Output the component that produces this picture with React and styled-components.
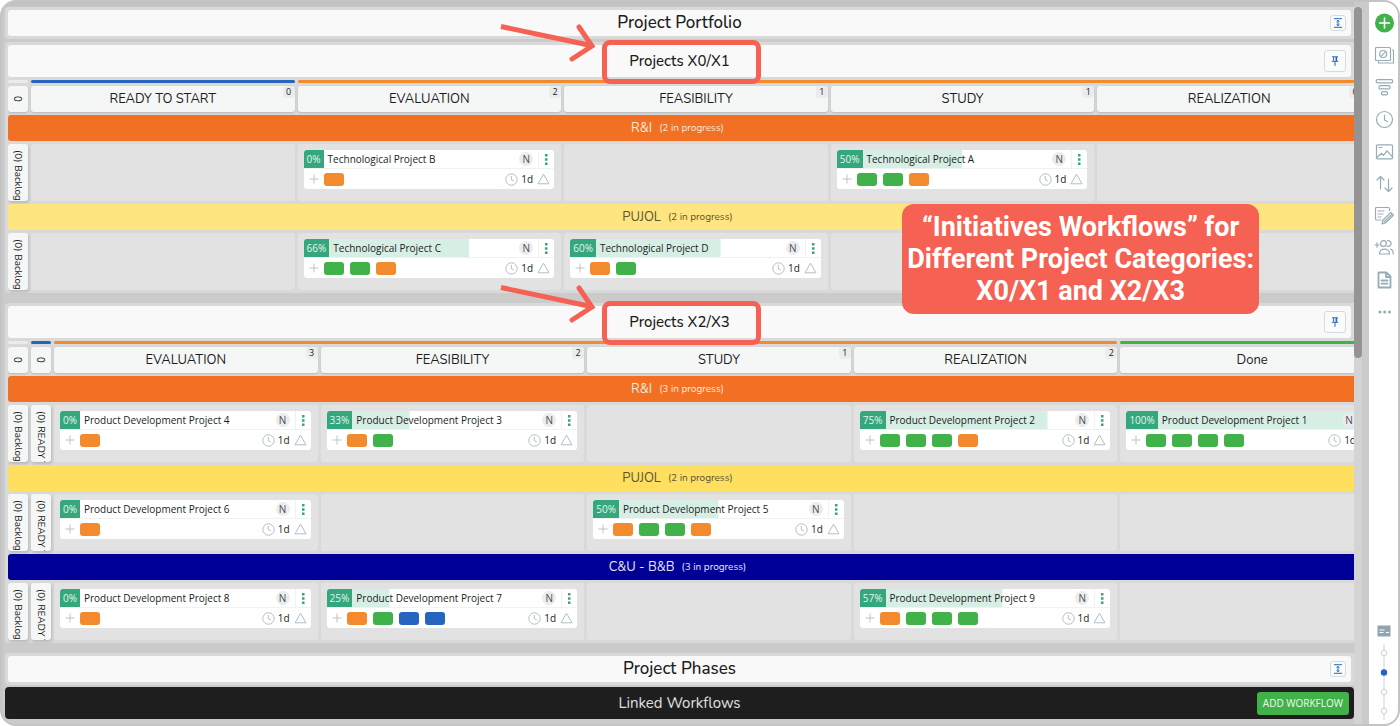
import React from "react";
import styled, { createGlobalStyle } from "styled-components";

const HEADING_FONT = `Nunito, "Noto Sans", sans-serif`;

const COLORS = {
  orange: "#f48a2e",
  green: "#41b149",
  blue: "#2565c0",
  pale: "#ebebeb",
  red: "#f56153",
  icon: "#97acb7",
};

const CATEGORY_X0 = {
  title: "Projects X0/X1",
  collapsed: ["Backlog"],
  strips: [
    { color: "pale", span: 1 },
    { color: "blue", span: 1 },
    { color: "orange", span: 4 },
  ],
  columns: [
    { name: "READY TO START", count: 0 },
    { name: "EVALUATION", count: 2 },
    { name: "FEASIBILITY", count: 1 },
    { name: "STUDY", count: 1 },
    { name: "REALIZATION", count: 0 },
  ],
  lanes: [
    {
      name: "R&I",
      total: 2,
      background: "#f27023",
      color: "#fde9dc",
      cards: {
        1: { name: "Technological Project B", progress: 0, items: ["orange"] },
        3: {
          name: "Technological Project A",
          progress: 50,
          items: ["green", "green", "orange"],
        },
      },
    },
    {
      name: "PUJOL",
      total: 2,
      background: "#ffe580",
      color: "#5c5334",
      cards: {
        1: {
          name: "Technological Project C",
          progress: 66,
          items: ["green", "green", "orange"],
        },
        2: {
          name: "Technological Project D",
          progress: 60,
          items: ["orange", "green"],
        },
      },
    },
  ],
};

const CATEGORY_X2 = {
  title: "Projects X2/X3",
  collapsed: ["Backlog", "READY TO START"],
  strips: [
    { color: "pale", span: 1 },
    { color: "blue", span: 1 },
    { color: "orange", span: 4 },
    { color: "green", span: 1 },
  ],
  columns: [
    { name: "EVALUATION", count: 3 },
    { name: "FEASIBILITY", count: 2 },
    { name: "STUDY", count: 1 },
    { name: "REALIZATION", count: 2 },
    { name: "Done", count: 1 },
  ],
  lanes: [
    {
      name: "R&I",
      total: 3,
      background: "#f27023",
      color: "#fde9dc",
      cards: {
        0: {
          name: "Product Development Project 4",
          progress: 0,
          items: ["orange"],
        },
        1: {
          name: "Product Development Project 3",
          progress: 33,
          items: ["orange", "green"],
        },
        3: {
          name: "Product Development Project 2",
          progress: 75,
          items: ["green", "green", "green", "orange"],
        },
        4: {
          name: "Product Development Project 1",
          progress: 100,
          items: ["green", "green", "green", "green"],
        },
      },
    },
    {
      name: "PUJOL",
      total: 2,
      background: "#ffdf60",
      color: "#5c5334",
      cards: {
        0: {
          name: "Product Development Project 6",
          progress: 0,
          items: ["orange"],
        },
        2: {
          name: "Product Development Project 5",
          progress: 50,
          items: ["orange", "green", "green", "orange"],
        },
      },
    },
    {
      name: "C&U - B&B",
      total: 3,
      background: "#000096",
      color: "#e6e6f4",
      cards: {
        0: {
          name: "Product Development Project 8",
          progress: 0,
          items: ["orange"],
        },
        1: {
          name: "Product Development Project 7",
          progress: 25,
          items: ["orange", "green", "blue", "blue"],
        },
        3: {
          name: "Product Development Project 9",
          progress: 57,
          items: ["orange", "green", "green", "green"],
        },
      },
    },
  ],
};

const GlobalStyle = createGlobalStyle`
  * {
    box-sizing: border-box;
  }

  body {
    margin: 0;
    background-color: #ffffff;
    font-family: "Open Sans", "Noto Sans", sans-serif;
    color: #1c1c1c;
  }

  button {
    padding: 0;
    border: 0;
    background: none;
    font: inherit;
    color: inherit;
    cursor: pointer;
  }

  h1, h2, h3, p {
    margin: 0;
    font-weight: normal;
  }
`;

const Frame = styled.div`
  position: relative;
  display: flex;
  min-height: 100vh;
  border: 2px solid #c4c4c4;
  border-radius: 16px;
  background-color: #cbcbcb;
  overflow: hidden;
`;

const Board = styled.main`
  flex: 1;
  display: flex;
  flex-direction: column;
  gap: 10px;
  min-width: 0;
  padding: 5px 0 5px 3px;
  box-shadow: inset 0 6px 4px -2px #bfbfbf;
`;

const Stack = styled.div`
  display: flex;
  flex-direction: column;
  gap: ${({ $gap }) => $gap}px;
`;

const Workflow = styled.section`
  display: flex;
  flex-direction: column;
  gap: 3px;
  padding: 3px 0 3px 3px;
  border-radius: 4px 0 0 4px;
  background-color: #d9d9d9;
`;

const TitleBar = styled.header`
  display: grid;
  grid-template-columns: 1fr auto 1fr;
  align-items: center;
  height: ${({ $large }) => ($large ? 26 : 32)}px;
  margin-right: 3px;
  padding: 0 5px;
  border-radius: 3px;
  background-color: #f9f9f9;
`;

const BoardTitle = styled.h1`
  grid-column: 2;
  font: 500 17px/26px ${HEADING_FONT};
`;

const WorkflowTitle = styled.h2`
  font: 500 15px/32px ${HEADING_FONT};
`;

const SquareButton = styled.button`
  justify-self: end;
  display: flex;
  align-items: center;
  justify-content: center;
  width: ${({ $size }) => $size}px;
  height: ${({ $size }) => $size}px;
  border: 1px solid #d3dddf;
  border-radius: 3px;
  background-color: #fafbfb;
`;

const Columns = styled.div`
  display: flex;
  flex-direction: column;
  gap: 3px;
  overflow-x: clip;
`;

const Grid = styled.div`
  display: grid;
  grid-template-columns:
    repeat(${({ $collapsed }) => $collapsed}, 20px)
    repeat(5, calc((100% - 28px) / 5));
  gap: 3px;
`;

const Strip = styled.div`
  grid-column: span ${({ $span }) => $span};
  height: 3px;
  border-radius: 2px;
  background-color: ${({ $color }) => COLORS[$color]};
`;

const ColumnHeader = styled.div`
  position: relative;
  height: 26px;
  border-radius: 3px;
  background-color: #f5f7f7;
  box-shadow: 0 1px 2px rgba(0, 0, 0, 0.15);
  text-align: center;
`;

const ColumnName = styled.h3`
  font: 13px/26px ${HEADING_FONT};
`;

const Count = styled.span`
  position: absolute;
  top: 0;
  right: 0;
  width: 12px;
  border-radius: 3px;
  background-color: #ebeced;
  font-size: 9px;
  line-height: 12px;
`;

const CollapsedHeader = styled(ColumnHeader)`
  display: flex;
  align-items: center;
  justify-content: center;
  writing-mode: vertical-rl;
  font-size: 10px;
`;

const Lane = styled.div`
  display: flex;
  align-items: center;
  justify-content: center;
  gap: 7px;
  height: 26px;
  padding-right: 7px;
  border-radius: 3px 0 0 3px;
  background-color: ${({ $background }) => $background};
  color: ${({ $color }) => $color};
  font: 13px/26px ${HEADING_FONT};
`;

const LaneCount = styled.span`
  font-size: 10px;
`;

const CollapsedCell = styled.div`
  height: 57px;
  padding-top: 6px;
  border-radius: 3px;
  background-color: #f5f7f7;
  box-shadow: 1px 2px 3px rgba(0, 0, 0, 0.15);
  writing-mode: vertical-rl;
  font: 10px/20px ${HEADING_FONT};
  white-space: nowrap;
  overflow: hidden;
`;

const Cell = styled.div`
  height: 57px;
  padding: 6px 7px 6px 6px;
  border-radius: 3px;
  background-color: #e2e2e2;
`;

const CardBox = styled.article`
  border-radius: 3px;
  background-color: #ffffff;
  overflow: hidden;
`;

const CardTop = styled.div`
  display: flex;
  align-items: center;
  height: 19px;
  border-bottom: 1px solid #f0f1f1;
  background-image: linear-gradient(#d6eee4, #d6eee4);
  background-repeat: no-repeat;
`;

const Percent = styled.span`
  padding: 0 3px;
  background-color: #34a87c;
  color: #e4f5ee;
  font-size: 10px;
  line-height: 18px;
`;

const CardName = styled.span`
  flex: 1;
  padding-left: 4px;
  font-size: 10px;
  line-height: 18px;
  white-space: nowrap;
`;

const Avatar = styled.span`
  width: 14px;
  margin-right: 5px;
  border-radius: 50%;
  background-color: #eaecee;
  color: #4b4f52;
  font-size: 10px;
  line-height: 14px;
  text-align: center;
`;

const MenuButton = styled.button`
  display: flex;
  align-items: center;
  justify-content: center;
  width: 16px;
  height: 18px;
  border-left: 1px solid #f0f1f1;
`;

const CardBottom = styled.div`
  display: flex;
  align-items: center;
  height: 20px;
  padding: 0 4px 0 5px;
`;

const Items = styled.div`
  flex: 1;
  display: flex;
  gap: 6px;
  padding-left: 5px;
`;

const Item = styled.span`
  width: 20px;
  height: 13px;
  border-radius: 3px;
  background-color: ${({ $color }) => COLORS[$color]};
`;

const Duration = styled.span`
  padding: 0 4px 0 3px;
  font-size: 10px;
  line-height: 20px;
`;

const LinkedBar = styled.footer`
  display: grid;
  grid-template-columns: 1fr auto 1fr;
  align-items: center;
  height: 32px;
  padding: 0 5px;
  border-radius: 4px;
  background-color: #1e1e1e;
`;

const LinkedTitle = styled.h2`
  grid-column: 2;
  color: #e0e0e0;
  font: 15px/32px ${HEADING_FONT};
`;

const AddButton = styled.button`
  justify-self: end;
  height: 23px;
  padding: 0 6px;
  border-radius: 3px;
  background-color: ${COLORS.green};
  color: #f2faf2;
  font-size: 10px;
  font-weight: 500;
`;

const ScrollTrack = styled.div`
  width: 8px;
  margin: 5px 7px 0 0;
  background-color: #d4d4d4;
`;

const ScrollThumb = styled.div`
  height: 49%;
  border-radius: 4px;
  background-color: #949494;
`;

const Rail = styled.nav`
  display: flex;
  flex-direction: column;
  justify-content: space-between;
  align-items: center;
  width: 29px;
  padding: 5px 0 2px 1px;
  background-color: #ffffff;
`;

const RailTools = styled.div`
  display: flex;
  flex-direction: column;
`;

const RailButton = styled.button`
  display: flex;
  align-items: center;
  justify-content: center;
  width: 28px;
  height: 32px;
`;

const HighlightAnchor = styled.div`
  position: relative;
  grid-column: 2;
`;

const Highlight = styled.span`
  position: absolute;
  inset: -5px -31px -7px -27px;
  border: 5px solid ${COLORS.red};
  border-radius: 8px;
`;

const Arrow = styled.svg`
  position: absolute;
  top: -22px;
  right: calc(100% + 34px);
`;

const Callout = styled.aside`
  position: absolute;
  top: 202px;
  right: 139px;
  padding: 7px 5px;
  border-radius: 12px;
  background-color: ${COLORS.red};
  color: #ffffff;
  font: 700 27px/32px Roboto, sans-serif;
  text-align: center;
`;

function Icon({ children }) {
  return (
    <svg
      width="20"
      height="20"
      viewBox="0 0 20 20"
      fill="none"
      stroke={COLORS.icon}
      strokeWidth="1.2"
      strokeLinecap="round"
      strokeLinejoin="round"
    >
      {children}
    </svg>
  );
}

const TOOLS = [
  {
    label: "Add",
    icon: (
      <>
        <circle cx="10.5" cy="10" r="9.5" fill={COLORS.green} stroke="none" />
        <path d="M10.5 5v10M5.500 10h10" stroke="#fff" strokeWidth="1.6" />
      </>
    ),
  },
  {
    label: "Blocked cards",
    icon: (
      <>
        <rect x="1.500" y="2.500" width="15" height="13" rx="1" />
        <path d="M18.500 5h1v13H4.500v-1.500" />
        <circle cx="9.200" cy="9" r="3.500" />
        <path d="M7 11.300l4.600-4.600" />
      </>
    ),
  },
  {
    label: "Filter",
    icon: (
      <>
        <rect x="2.200" y="2.700" width="16.4" height="3.2" rx="1.2" />
        <rect x="5" y="8.700" width="11" height="3.2" rx="1.2" />
        <rect x="7.500" y="14.700" width="6" height="3.2" rx="1.2" />
      </>
    ),
  },
  {
    label: "History",
    icon: (
      <>
        <circle cx="10.5" cy="10.5" r="8" />
        <path d="M10.5 6v5l3.2 1.7" />
      </>
    ),
  },
  {
    label: "Background",
    icon: (
      <>
        <rect x="2.5" y="3.800" width="16" height="14" rx="1" />
        <path d="M3 16.300l4.500-4 2 2 3.500-4.500 5 5.500M5 6.500h3" />
      </>
    ),
  },
  {
    label: "Sort",
    icon: (
      <path d="M6.500 16V3.500M3 7l3.500-3.500L10 7M14.500 6v12.500M11 15l3.500 3.500 3.500-3.500" />
    ),
  },
  {
    label: "Edit",
    icon: (
      <>
        <path d="M7 15H2.500a1 1 0 0 1-1-1V3.500a1 1 0 0 1 1-1h12a1 1 0 0 1 1 1v2M4 6h6M4 9h5M4 12h3" />
        <path d="M8 19l.8-3.800 8-7.700 2.600 2.700-8 7.800zM10 17l7.500-7.300" />
      </>
    ),
  },
  {
    label: "Invite users",
    icon: (
      <>
        <path d="M.8 8h4.400M3 5.800v4.400" />
        <circle cx="9.500" cy="6.500" r="2.900" />
        <path d="M13.500 3.700a2.900 2.900 0 1 1 0 5.600M5.500 17c-.6-6.500 10.600-6.500 10 0zM16.500 12c1.700.7 2.800 2.500 2.700 5" />
      </>
    ),
  },
  {
    label: "Documents",
    icon: (
      <path
        d="M4.500 3.500h8l4 4v11h-12zM12 3.800v4.200h4.200M7.500 11.500h6M7.500 14.700h6"
        strokeWidth="1.8"
      />
    ),
  },
  {
    label: "More",
    icon: (
      <g fill={COLORS.icon} stroke="none">
        <circle cx="6" cy="11" r="1.500" />
        <circle cx="10.700" cy="11" r="1.500" />
        <circle cx="15.500" cy="11" r="1.500" />
      </g>
    ),
  },
];

function FitIcon() {
  return (
    <svg width="10" height="10" viewBox="0 0 10 10" stroke={COLORS.blue} fill="none">
      <path d="M1 .7h8M1 9.300h8" />
      <path d="M5 2.500v5M3.500 3.700L5 2.300l1.500 1.400M3.500 6.300L5 7.700l1.500-1.400" />
    </svg>
  );
}

function PinIcon() {
  return (
    <svg width="10" height="10" viewBox="0 0 10 10" stroke={COLORS.blue} fill="none">
      <path d="M2 .8h6M3.600 1v3.700M6.400 1v3.700M1.800 5.300h6.400M5 5.500v4.300" />
      <path d="M6.400 1v4" strokeWidth="1.500" />
    </svg>
  );
}

function Card({ card }) {
  return (
    <CardBox>
      <CardTop style={{ backgroundSize: `${card.progress}% 100%` }}>
        <Percent>{card.progress}%</Percent>
        <CardName>{card.name}</CardName>
        <Avatar>N</Avatar>
        <MenuButton aria-label="Card menu">
          <svg width="3" height="11" viewBox="0 0 3 11" fill="#34a87c">
            <path d="M0 0h2.500v2.500H0zM0 4.200h2.500v2.500H0zM0 8.400h2.500v2.500H0z" />
          </svg>
        </MenuButton>
      </CardTop>
      <CardBottom>
        <svg width="10" height="10" viewBox="0 0 10 10" stroke="#b9c4ca">
          <path d="M5 .5v9M.5 5h9" />
        </svg>
        <Items>
          {card.items.map((color, index) => (
            <Item key={index} $color={color} />
          ))}
        </Items>
        <svg width="13" height="13" viewBox="0 0 13 13" stroke="#b0bec5" fill="none">
          <circle cx="6.500" cy="6.500" r="5.700" />
          <path d="M6.300 3v3.800l2.500 1" />
        </svg>
        <Duration>1d</Duration>
        <svg width="13" height="12" viewBox="0 0 13 12" stroke="#b0bec5" fill="none">
          <path d="M6.500 1.200L12 10.800H1z" strokeLinejoin="round" />
        </svg>
      </CardBottom>
    </CardBox>
  );
}

function PinnedTitle({ children }) {
  return (
    <TitleBar>
      <HighlightAnchor>
        <WorkflowTitle>{children}</WorkflowTitle>
        <Highlight />
        <Arrow width="96" height="40" viewBox="0 0 96 40" fill="none" stroke={COLORS.red}>
          <path d="M2 3.500L92 22.500" strokeWidth="5" />
          <path
            d="M80 4l13 19-20 13"
            strokeWidth="5"
            strokeLinecap="round"
            strokeLinejoin="miter"
          />
        </Arrow>
      </HighlightAnchor>
      <SquareButton $size={22} aria-label="Pin workflow">
        <PinIcon />
      </SquareButton>
    </TitleBar>
  );
}

function CategoryWorkflow({ workflow }) {
  const collapsed = workflow.collapsed.length;

  return (
    <Workflow>
      <PinnedTitle>{workflow.title}</PinnedTitle>
      <Columns>
        <Grid $collapsed={collapsed}>
          {workflow.strips.map((strip, index) => (
            <Strip key={index} $color={strip.color} $span={strip.span} />
          ))}
        </Grid>
        <Grid $collapsed={collapsed}>
          {workflow.collapsed.map((name) => (
            <CollapsedHeader key={name}>0</CollapsedHeader>
          ))}
          {workflow.columns.map((column) => (
            <ColumnHeader key={column.name}>
              <ColumnName>{column.name}</ColumnName>
              <Count>{column.count}</Count>
            </ColumnHeader>
          ))}
        </Grid>
        {workflow.lanes.map((lane) => (
          <React.Fragment key={lane.name}>
            <Lane $background={lane.background} $color={lane.color}>
              {lane.name}
              <LaneCount>({lane.total} in progress)</LaneCount>
            </Lane>
            <Grid $collapsed={collapsed}>
              {workflow.collapsed.map((name) => (
                <CollapsedCell key={name}>(0) {name}</CollapsedCell>
              ))}
              {workflow.columns.map((column, index) => (
                <Cell key={column.name}>
                  {lane.cards[index] && <Card card={lane.cards[index]} />}
                </Cell>
              ))}
            </Grid>
          </React.Fragment>
        ))}
      </Columns>
    </Workflow>
  );
}

function ClosedWorkflow({ title }) {
  return (
    <Workflow>
      <TitleBar $large>
        <BoardTitle>{title}</BoardTitle>
        <SquareButton $size={16} aria-label="Expand workflow">
          <FitIcon />
        </SquareButton>
      </TitleBar>
    </Workflow>
  );
}

function ZoomSlider() {
  return (
    <svg width="14" height="98" viewBox="0 0 14 98" fill="#fff" stroke="#c9d3d8">
      <path d="M.5 1.500h13v11H.5z" fill="#8fa5b1" stroke="none" />
      <path d="M2.500 6h5M2.500 8.500h4M9 8.500h3" stroke="#fff" />
      <path d="M7 20v76" />
      <circle cx="7" cy="29" r="2.800" />
      <circle cx="7" cy="48.500" r="3.200" fill={COLORS.blue} stroke="none" />
      <circle cx="7" cy="68" r="2.800" />
      <circle cx="7" cy="87" r="2.800" />
    </svg>
  );
}

export default function App() {
  return (
    <>
      <GlobalStyle />
      <Frame>
        <Board>
          <Stack $gap={3}>
            <ClosedWorkflow title="Project Portfolio" />
            <CategoryWorkflow workflow={CATEGORY_X0} />
          </Stack>
          <CategoryWorkflow workflow={CATEGORY_X2} />
          <Stack $gap={2}>
            <ClosedWorkflow title="Project Phases" />
            <LinkedBar>
              <LinkedTitle>Linked Workflows</LinkedTitle>
              <AddButton>ADD WORKFLOW</AddButton>
            </LinkedBar>
          </Stack>
        </Board>
        <ScrollTrack>
          <ScrollThumb />
        </ScrollTrack>
        <Rail>
          <RailTools>
            {TOOLS.map((tool) => (
              <RailButton key={tool.label} aria-label={tool.label}>
                <Icon>{tool.icon}</Icon>
              </RailButton>
            ))}
          </RailTools>
          <ZoomSlider />
        </Rail>
        <Callout>
          “Initiatives Workflows” for
          <br />
          Different Project Categories:
          <br />
          X0/X1 and X2/X3
        </Callout>
      </Frame>
    </>
  );
}
